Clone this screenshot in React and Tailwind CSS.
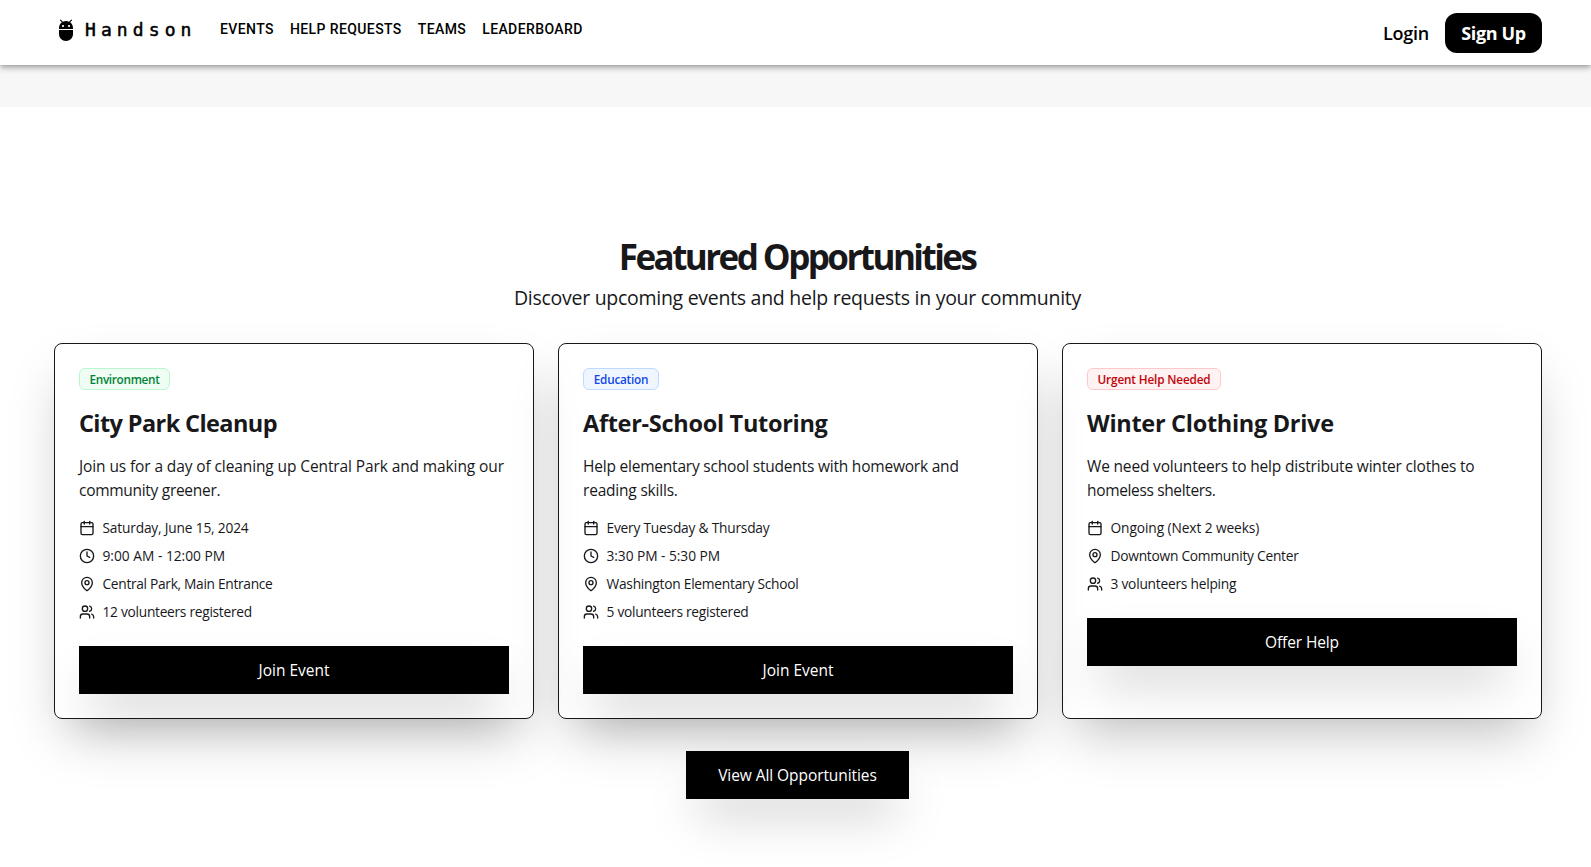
import { Calendar, Clock, MapPin, Users } from "lucide-react";

const NAV = ["EVENTS", "HELP REQUESTS", "TEAMS", "LEADERBOARD"];

const CARDS = [
  {
    badge: "Environment",
    badgeClass: "w-[91px] border-green-200 bg-green-50 text-green-700 tracking-[-0.3px]",
    title: "City Park Cleanup",
    titleClass: "tracking-[-0.6px]",
    lines: [
      ["Join us for a day of cleaning up Central Park and making our", "tracking-[-0.11px]"],
      ["community greener.", "tracking-[-0.29px]"],
    ],
    rows: [
      [Calendar, "Saturday, June 15, 2024", "tracking-[-0.19px]"],
      [Clock, "9:00 AM - 12:00 PM", "tracking-[0px]"],
      [MapPin, "Central Park, Main Entrance", "tracking-[-0.31px]"],
      [Users, "12 volunteers registered", "tracking-[-0.28px]"],
    ],
    action: "Join Event",
    actionClass: "tracking-[0px]",
  },
  {
    badge: "Education",
    badgeClass: "w-[76px] border-blue-200 bg-blue-50 text-blue-700 tracking-[-0.23px]",
    title: "After-School Tutoring",
    titleClass: "tracking-[-0.3px]",
    lines: [
      ["Help elementary school students with homework and", "tracking-[-0.21px]"],
      ["reading skills.", "tracking-[-0.2px]"],
    ],
    rows: [
      [Calendar, "Every Tuesday & Thursday", "tracking-[-0.22px]"],
      [Clock, "3:30 PM - 5:30 PM", "tracking-[-0.05px]"],
      [MapPin, "Washington Elementary School", "tracking-[-0.24px]"],
      [Users, "5 volunteers registered", "tracking-[-0.27px]"],
    ],
    action: "Join Event",
    actionClass: "tracking-[0px]",
  },
  {
    badge: "Urgent Help Needed",
    badgeClass: "w-[134px] border-red-200 bg-red-50 text-red-700 tracking-[-0.15px]",
    title: "Winter Clothing Drive",
    titleClass: "tracking-[-0.3px]",
    lines: [
      ["We need volunteers to help distribute winter clothes to", "tracking-[-0.175px]"],
      ["homeless shelters.", "tracking-[-0.35px]"],
    ],
    rows: [
      [Calendar, "Ongoing (Next 2 weeks)", "tracking-[-0.1px]"],
      [MapPin, "Downtown Community Center", "tracking-[-0.25px]"],
      [Users, "3 volunteers helping", "tracking-[-0.23px]"],
    ],
    action: "Offer Help",
    actionClass: "tracking-[-0.11px]",
  },
];

function Logo() {
  return (
    <svg viewBox="0 0 24 24" className="size-6 fill-black">
      <path d="M5 16c0 3.87 3.13 7 7 7s7-3.13 7-7v-4H5v4zM16.12 4.37l2.1-2.1-.82-.83-2.3 2.31C14.16 3.28 13.12 3 12 3s-2.16.28-3.09.75L6.6 1.44l-.82.83 2.1 2.1C6.14 5.64 5 7.68 5 10v1h14v-1c0-2.32-1.14-4.36-2.88-5.63zM9 9c-.55 0-1-.45-1-1s.45-1 1-1 1 .45 1 1-.45 1-1 1zm6 0c-.55 0-1-.45-1-1s.45-1 1-1 1 .45 1 1-.45 1-1 1z" />
    </svg>
  );
}

function Header() {
  return (
    <header className="relative z-10 flex h-[65px] items-center justify-between bg-white pr-[49px] pl-[54px] text-black shadow-[0_2px_4px_-1px_rgba(0,0,0,0.2),0_4px_5px_0_rgba(0,0,0,0.14),0_1px_10px_0_rgba(0,0,0,0.12)]">
      <div className="flex h-[59px] items-center self-start">
        <Logo />
        <span className="ml-[7px] w-[135px] font-['DejaVu_Sans_Mono',monospace] text-[18px] leading-6 tracking-[5.1px] [-webkit-text-stroke:0.5px_black]">
          Handson
        </span>
        <nav className="flex gap-4 pb-[2px] font-[Roboto,sans-serif] text-sm font-medium tracking-[0.4px]">
          {NAV.map((item) => (
            <a key={item}>{item}</a>
          ))}
        </nav>
      </div>
      <div className="flex items-center gap-4 text-[18px]">
        <a className="pt-[2px] font-[550] tracking-[-0.25px]">Login</a>
        <button className="h-10 w-[97px] rounded-xl bg-black pt-[2px] text-center font-bold tracking-[-0.35px] whitespace-nowrap text-white">
          Sign Up
        </button>
      </div>
    </header>
  );
}

function Card({ card }) {
  return (
    <article className="rounded-lg border border-zinc-900 p-6 shadow-2xl">
      <div
        className={`flex h-[22px] items-center justify-center rounded-md border pt-[2px] text-[11.75px] font-semibold whitespace-nowrap ${card.badgeClass}`}
      >
        {card.badge}
      </div>
      <h3 className={`mt-[17px] text-[23.5px] leading-8 font-bold ${card.titleClass}`}>
        {card.title}
      </h3>
      <p className="mt-[15px] text-[15.5px] leading-6 whitespace-nowrap">
        {card.lines.map(([text, tracking]) => (
          <span key={text} className={`block ${tracking}`}>
            {text}
          </span>
        ))}
      </p>
      <ul className="mt-4 flex flex-col gap-2 text-[13.75px] leading-5">
        {card.rows.map(([Icon, text, tracking]) => (
          <li key={text} className="flex items-center gap-[7.5px]">
            <Icon className="size-4" />
            <span className={tracking}>{text}</span>
          </li>
        ))}
      </ul>
      <button
        className={`mt-6 h-12 w-full bg-black pt-[2px] text-[15.5px] text-white shadow-2xl ${card.actionClass}`}
      >
        {card.action}
      </button>
    </article>
  );
}

export default function App() {
  return (
    <div className="h-[867px] overflow-hidden bg-white font-['Open_Sans',sans-serif] text-zinc-900">
      <Header />
      <div className="h-[42px] bg-[#f7f7f7]" />
      <section className="flex flex-col items-center pt-[130px] pr-[49px] pl-[54px]">
        <h2 className="mr-[2px] text-[35px] leading-10 font-bold tracking-[-2.55px]">
          Featured Opportunities
        </h2>
        <p className="mt-[7px] mr-px text-[19.5px] leading-7 tracking-[-0.28px]">
          Discover upcoming events and help requests in your community
        </p>
        <div className="mt-[31px] grid w-full grid-cols-3 gap-6">
          {CARDS.map((card) => (
            <Card key={card.title} card={card} />
          ))}
        </div>
        <button className="mt-8 mr-px h-12 w-[223px] bg-black pt-[2px] text-[15.5px] tracking-[-0.07px] text-white shadow-2xl">
          View All Opportunities
        </button>
      </section>
    </div>
  );
}
